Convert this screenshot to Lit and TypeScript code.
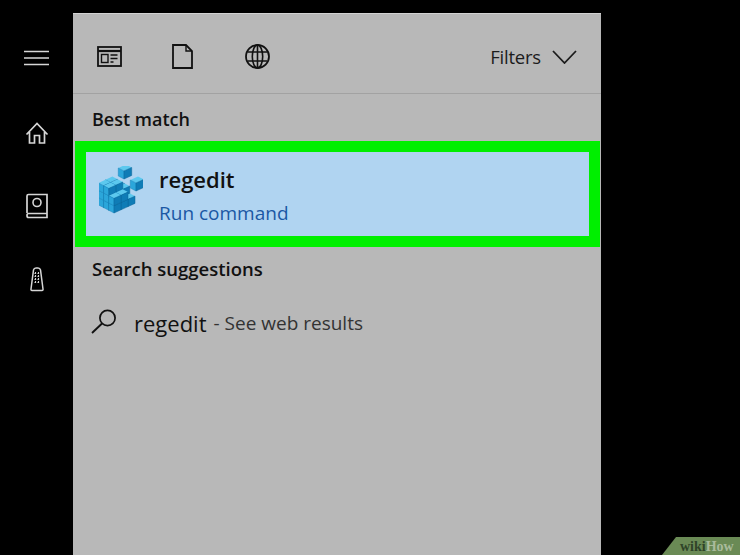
import { LitElement, html, css, svg } from 'lit';
import { customElement } from 'lit/decorators.js';

const panelIcon = (content: unknown, w = 28, h = 28) => html`
  <svg width=${w} height=${h} viewBox="0 0 ${w} ${h}" fill="none" stroke="currentColor">${content}</svg>`;

const menuIcon = panelIcon(svg`<path d="M0 1.5H25M0 8H25M0 14.5H25" stroke-width="1.3"/>`, 25, 17);
const homeIcon = panelIcon(svg`
  <path d="M1.5 12.5 12 1.5 22.5 12.5M4.5 10V21H9.5V13.5H14.5V21H19.5V10" stroke-width="1.7"/>`, 24, 23);
const bookIcon = panelIcon(svg`
  <path d="M2 20V3Q2 1.5 3.5 1.5H22V24.5H3.5Q2 24.5 2 22.5Q2 20.5 3.5 20.5H22" stroke-width="1.7"/>
  <circle cx="12" cy="9.5" r="4" stroke-width="1.6"/>`, 24, 26);
const remoteIcon = panelIcon(svg`
  <path d="M4.5 3Q5 1 7 1H9Q11 1 11.5 3L14 22Q14.2 23.5 13 23.5H3Q1.8 23.5 2 22Z" stroke-width="1.5"/>
  <path d="M5.5 6.5H10.5M5.5 9.5H10.5M5.5 12.5H10.5M5.5 15.5H10.5M6.5 5V17M9.5 5V17" stroke-width="1.1" stroke-dasharray="1.6 1.4"/>`, 16, 25);
const appsIcon = panelIcon(svg`
  <rect x="1" y="1" width="23" height="19" stroke-width="1.8"/>
  <path d="M1 5H24" stroke-width="2.2"/>
  <rect x="4.5" y="8.5" width="6.5" height="8" stroke-width="1.4"/>
  <path d="M13.5 9H20.5M13.5 12.5H20.5M13.5 16H16.5" stroke-width="1.4"/>`, 25, 21);
const docIcon = panelIcon(svg`
  <path d="M1 1H14L20 7V24H1Z" stroke-width="1.8"/>
  <path d="M14 1V7H20" stroke-width="1.4"/>`, 21, 25);
const globeIcon = panelIcon(svg`
  <circle cx="12.5" cy="12.5" r="11.5" stroke-width="1.8"/>
  <ellipse cx="12.5" cy="12.5" rx="5.2" ry="11.5" stroke-width="1.6"/>
  <path d="M12.5 1V24M2.5 8H22.5M2.5 17H22.5" stroke-width="1.6"/>`, 25, 25);
const chevronIcon = panelIcon(svg`<path d="M1 1 12.5 13 24 1" stroke-width="1.8"/>`, 25, 14);
const searchIcon = panelIcon(svg`
  <circle cx="16.5" cy="9" r="7.6" stroke-width="1.7"/>
  <path d="M11 14.5 1 24" stroke-width="1.9"/>`, 26, 25);

// one isometric cube, (x, y) being its bottom front corner
const L = [-5.2, -2.7];
const R = [7, -3.2];
const UP = 7.3;
const cube = (x: number, y: number, l = 1) => {
  const lx = L[0] * l, ly = L[1] * l, rx = R[0] * l, ry = R[1] * l, u = UP * l;
  const tx = x, ty = y - u;
  return svg`
    <path d="M${tx} ${ty}l${lx} ${ly} ${rx} ${ry} ${-lx} ${-ly}z" fill="#5cc8ee"/>
    <path d="M${x} ${y}l${lx} ${ly}v${-u}l${-lx} ${-ly}z" fill="#2ba6da" stroke="#1a86bc" stroke-width=".5"/>
    <path d="M${x} ${y}l${rx} ${ry}v${-u}l${-rx} ${-ry}z" fill="#0f7cb6" stroke="#0a6498" stroke-width=".5"/>`;
};

// stack heights, rows run from the back left to the front
const heights = [[3, 3, 2], [3, 3, 2], [2, 2, 1]];
const stack = heights.flatMap((row, r) => {
  const i = 2 - r;
  return [2, 1, 0].flatMap(j =>
    Array.from({ length: row[j] }, (_, k) =>
      cube(15 + L[0] * i + R[0] * j, 47 + L[1] * i + R[1] * j - UP * k)));
});

const regeditLogo = html`
  <svg class="logo" width="44" height="48" viewBox="0 0 44 48">
    ${stack}
    ${cube(25, 13, 1.1)}
    ${cube(37, 25, 1.1)}
  </svg>`;

@customElement('app-root')
export class AppRoot extends LitElement {
  static styles = css`
    :host {
      background: #000;
      display: flex;
      font-family: "Open Sans", "Noto Sans", sans-serif;
      height: 555px;
      overflow: hidden;
      position: relative;
      width: 740px;
    }

    .rail {
      align-items: center;
      color: #d6d6d6;
      display: flex;
      flex-direction: column;
      padding-top: 50px;
      width: 73px;
    }

    .rail .menu { height: 17px; margin-bottom: 55px; }
    .rail .home { height: 23px; margin-bottom: 48px; }
    .rail .book { height: 26px; margin-bottom: 48px; }

    .panel {
      background: #b8b8b8;
      border-top: 1px solid #d2d2d2;
      box-sizing: border-box;
      color: #111;
      display: flex;
      flex-direction: column;
      height: 542px;
      margin-top: 13px;
      width: 528px;
    }

    .toolbar {
      align-items: center;
      border-bottom: 1px solid #a2a2a2;
      box-sizing: content-box;
      display: flex;
      height: 73px;
      padding: 6px 24px 0 24px;
    }

    .toolbar svg { display: block; }
    .tabs { align-items: center; display: flex; gap: 50px; }
    .tabs div { display: flex; }
    .tabs div:last-child { margin-left: 2px; }

    .filters {
      align-items: center;
      color: #1c1c1c;
      display: flex;
      font-size: 18.5px;
      gap: 11px;
      letter-spacing: -0.2px;
      margin-left: auto;
    }

    .heading {
      font-size: 18px;
      font-weight: 600;
      line-height: 24px;
      padding-left: 19px;
    }

    .best { margin-top: 13px; }
    .suggest { font-size: 18.5px; margin-top: 10px; }

    .result {
      align-items: center;
      background: #b0d4f1;
      border: 11px solid #00ef00;
      box-sizing: border-box;
      display: flex;
      gap: 16px;
      height: 106px;
      margin: 10px 1px 0 2px;
      padding-left: 13px;
    }

    .logo { margin-top: -9px; }

    .name {
      font-size: 22px;
      font-weight: 600;
      line-height: 30px;
      margin-top: 1px;
    }

    .kind {
      color: #1a58a4;
      font-size: 19px;
      line-height: 26px;
      margin-top: 6px;
    }

    .web {
      align-items: center;
      display: flex;
      gap: 17px;
      margin-top: 24px;
      padding-left: 18px;
    }

    .web .term { font-size: 22px; line-height: 30px; margin-top: 3px; }
    .web .rest { color: #333; font-size: 19px; margin-left: -10px; margin-top: 3px; }

    .mark {
      background: #6a8a55;
      bottom: 0;
      clip-path: polygon(14px 0, 100% 0, 100% 100%, 0 100%);
      font-family: "Liberation Serif", serif;
      font-size: 14px;
      font-weight: 700;
      height: 18px;
      line-height: 19px;
      padding-left: 18px;
      position: absolute;
      right: 0;
      width: 60px;
    }

    .mark b { color: #2f4428; }
    .mark span { color: #a9bb9c; }
  `;

  render() {
    return html`
      <nav class="rail">
        <div class="menu">${menuIcon}</div>
        <div class="home">${homeIcon}</div>
        <div class="book">${bookIcon}</div>
        <div>${remoteIcon}</div>
      </nav>
      <main class="panel">
        <div class="toolbar">
          <div class="tabs">
            <div>${appsIcon}</div>
            <div>${docIcon}</div>
            <div>${globeIcon}</div>
          </div>
          <div class="filters">Filters ${chevronIcon}</div>
        </div>
        <div class="heading best">Best match</div>
        <div class="result">
          ${regeditLogo}
          <div>
            <div class="name">regedit</div>
            <div class="kind">Run command</div>
          </div>
        </div>
        <div class="heading suggest">Search suggestions</div>
        <div class="web">
          ${searchIcon}
          <span class="term">regedit</span>
          <span class="rest">- See web results</span>
        </div>
      </main>
      <div class="mark"><b>wiki</b><span>How</span></div>
    `;
  }
}
